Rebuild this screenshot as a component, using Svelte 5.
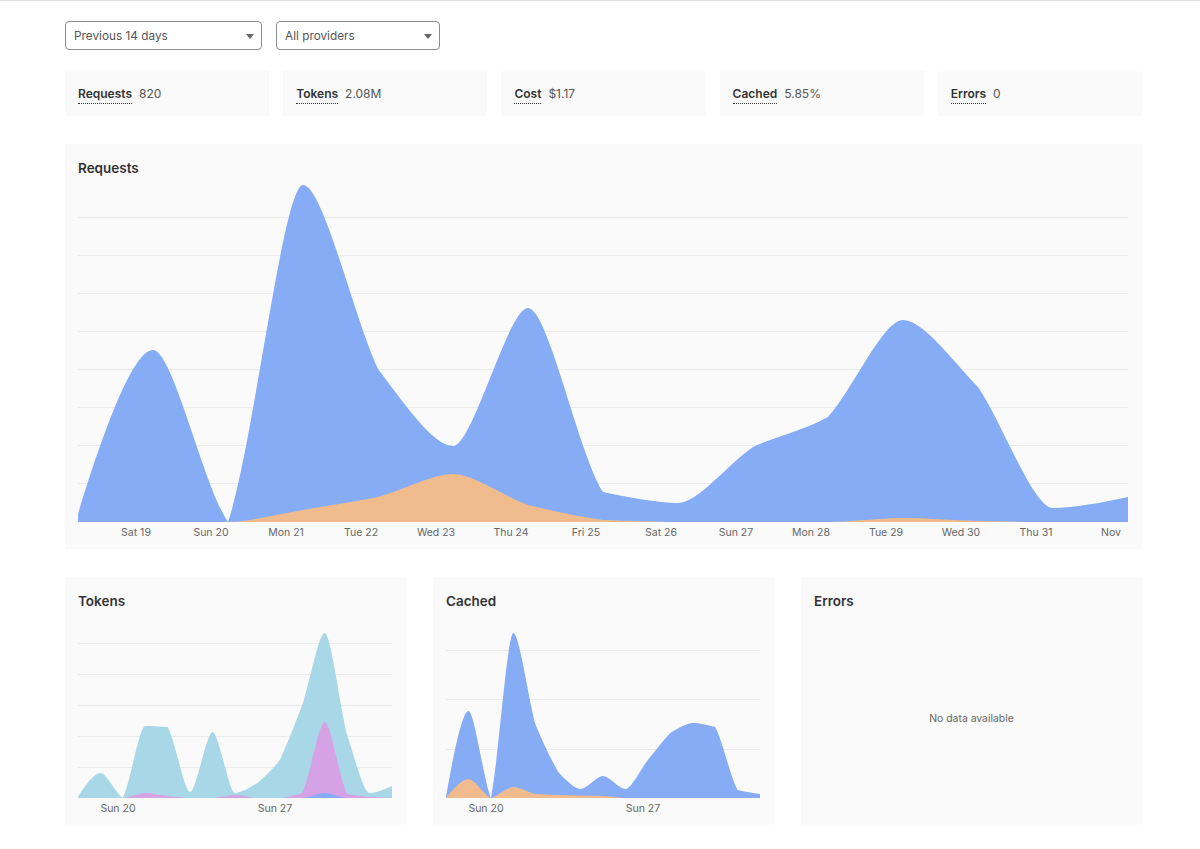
<script>
  const stats = [
    { label: 'Requests', value: '820' },
    { label: 'Tokens', value: '2.08M' },
    { label: 'Cost', value: '$1.17' },
    { label: 'Cached', value: '5.85%' },
    { label: 'Errors', value: '0' }
  ]

  const blue = '#85acf5'
  const orange = '#f0bb8d'
  const teal = '#a8d8e8'
  const pink = '#d5a2e6'

  const days = ['Sat 19', 'Sun 20', 'Mon 21', 'Tue 22', 'Wed 23', 'Thu 24', 'Fri 25', 'Sat 26', 'Sun 27', 'Mon 28', 'Tue 29', 'Wed 30', 'Thu 31', 'Nov']

  const requests = {
    width: 1050,
    height: 369,
    base: 342,
    grid: [37, 75, 113, 151, 189, 227, 265, 303],
    ticks: days.map((label, i) => ({ label, x: 58 + i * 75 })),
    series: [
      { color: blue, values: [8, 172, 0, 337, 153, 76, 214, 30, 19, 75, 105, 202, 135, 14, 25] },
      { color: orange, values: [0, 0, 0, 12, 25, 48, 17, 2, 0, 0, 0, 4, 1, 0, 0] }
    ]
  }

  const tokens = {
    width: 314,
    height: 212,
    base: 185,
    grid: [30, 61, 92, 123, 154],
    ticks: [{ label: 'Sun 20', x: 40 }, { label: 'Sun 27', x: 197 }],
    series: [
      { color: teal, values: [1, 25, 0, 72, 71, 6, 66, 5, 15, 38, 93, 165, 63, 5, 12] },
      { color: pink, values: [0, 0, 0, 5, 2, 0, 0, 3, 0, 0, 5, 76, 4, 1, 0] },
      { color: blue, values: [0, 0, 0, 0, 0, 0, 0, 0, 0, 0, 0, 5, 0, 0, 0] }
    ]
  }

  const cached = {
    width: 314,
    height: 212,
    base: 185,
    grid: [37, 86, 136],
    ticks: [{ label: 'Sun 20', x: 40 }, { label: 'Sun 27', x: 197 }],
    series: [
      { color: blue, values: [1, 87, 0, 165, 73, 26, 9, 22, 9, 38, 65, 75, 71, 8, 4] },
      { color: orange, values: [0, 19, 0, 11, 4, 3, 2.5, 2, 0, 0, 0, 0, 0, 0, 0] }
    ]
  }

  // monotone tangents, except that a slope change keeps a bit of a corner
  // and a drop to the baseline between two humps ends in a notch
  function tangents(values, ys, step) {
    const n = ys.length
    const d = ys.slice(1).map((y, i) => (y - ys[i]) / step)
    const out = new Array(n).fill(0)
    const into = new Array(n).fill(0)
    for (let i = 1; i < n - 1; i++) {
      const a = d[i - 1]
      const b = d[i]
      if (a * b > 0) {
        const m = (Math.sign(a) + Math.sign(b)) * Math.min(Math.abs(a), Math.abs(b), 0.25 * Math.abs(a + b))
        into[i] = m + (a - m) * 0.6
        out[i] = m + (b - m) * 0.6
      } else if (values[i] === 0 && a > 0 && b < 0) {
        into[i] = a * 0.65
        out[i] = b * 0.65
      }
    }
    out[0] = (3 * d[0] - into[1]) / 2
    into[n - 1] = (3 * d[n - 2] - out[n - 2]) / 2
    return { into, out }
  }

  function areaPath(values, chart) {
    const step = chart.width / (values.length - 1)
    const ys = values.map((v) => chart.base - v)
    const { into, out } = tangents(values, ys, step)
    const dx = step / 3
    // flat tangents get a shorter handle so the tops stay narrow
    const reach = (m) => (m === 0 ? dx * 0.8 : dx)
    let d = `M0,${chart.base}L0,${ys[0]}`
    for (let i = 1; i < ys.length; i++) {
      const x0 = (i - 1) * step
      const x1 = i * step
      d += `C${x0 + reach(out[i - 1])},${ys[i - 1] + out[i - 1] * dx} ${x1 - reach(into[i])},${ys[i] - into[i] * dx} ${x1},${ys[i]}`
    }
    return d + `L${chart.width},${chart.base}Z`
  }
</script>

{#snippet areaChart(chart)}
  <svg class="plot" viewBox="0 0 {chart.width + 1} {chart.height}" height={chart.height} role="img">
    {#each chart.grid as y}
      <line x1="0" x2={chart.width} y1={y + 0.5} y2={y + 0.5} class="grid" />
    {/each}
    {#each chart.series as s}
      <path d={areaPath(s.values, chart)} fill={s.color} />
    {/each}
    {#each chart.ticks as tick}
      <text x={tick.x} y={chart.base + 14} text-anchor="middle" class="tick">{tick.label}</text>
    {/each}
  </svg>
{/snippet}

<main class="page">
  <div class="filters">
    <div class="select-wrap range">
      <select aria-label="Date range">
        <option>Previous 14 days</option>
        <option>Previous 30 days</option>
      </select>
      <svg class="caret" viewBox="0 0 8 5" width="8" height="5"><path d="M0 0h8L4 5z" /></svg>
    </div>
    <div class="select-wrap provider">
      <select aria-label="Provider">
        <option>All providers</option>
      </select>
      <svg class="caret" viewBox="0 0 8 5" width="8" height="5"><path d="M0 0h8L4 5z" /></svg>
    </div>
  </div>

  <div class="stats">
    {#each stats as stat}
      <div class="stat">
        <span class="stat-label">{stat.label}</span>
        <span class="stat-value">{stat.value}</span>
      </div>
    {/each}
  </div>

  <section class="card">
    <h3>Requests</h3>
    {@render areaChart(requests)}
  </section>

  <div class="lower">
    <section class="card">
      <h3>Tokens</h3>
      {@render areaChart(tokens)}
    </section>
    <section class="card">
      <h3>Cached</h3>
      {@render areaChart(cached)}
    </section>
    <section class="card">
      <h3>Errors</h3>
      <div class="empty">No data available</div>
    </section>
  </div>
</main>

<style>
  :global(body) {
    background: #fff;
    color: #333;
    font-family: Inter, "Noto Sans", sans-serif;
  }

  .page {
    display: flex;
    flex-direction: column;
    gap: 28px;
    box-sizing: border-box;
    min-height: 849px;
    padding: 20px 58px 0 65px;
    border-top: 1px solid #dedede;
  }

  .filters {
    display: flex;
    gap: 14px;
    margin-bottom: -7px;
  }

  .select-wrap {
    position: relative;
  }

  .range {
    width: 197px;
  }

  .provider {
    width: 164px;
  }

  select {
    appearance: none;
    display: block;
    box-sizing: border-box;
    width: 100%;
    height: 29px;
    padding: 0 8px;
    border: 1px solid #8c8c8c;
    border-radius: 4px;
    background: #fff;
    color: #555;
    font: 11.8px Inter, "Noto Sans", sans-serif;
  }

  .caret {
    position: absolute;
    top: 13px;
    right: 8px;
    fill: #666;
    pointer-events: none;
  }

  .stats {
    display: grid;
    grid-template-columns: repeat(5, minmax(0, 1fr));
    gap: 14px;
  }

  .stat {
    display: flex;
    align-items: center;
    gap: 7px;
    box-sizing: border-box;
    height: 45px;
    padding: 3px 13px 0;
    background: #fafafa;
    font-size: 12px;
  }

  .stat-label {
    padding-bottom: 1px;
    border-bottom: 1px dotted #333;
    color: #333;
    font-weight: 600;
    line-height: 16px;
  }

  .stat-value {
    margin-top: -3px;
    color: #555;
  }

  .card {
    display: flex;
    flex-direction: column;
    box-sizing: border-box;
    padding: 14px 13px 0;
    background: #fafafa;
  }

  h3 {
    height: 20px;
    margin: 0 0 2px;
    color: #333;
    font-size: 13.5px;
    font-weight: 600;
    line-height: 20px;
  }

  .plot {
    display: block;
    width: 100%;
  }

  .grid {
    stroke: #ebebeb;
    stroke-width: 1;
  }

  .tick {
    fill: #666;
    font-size: 10.5px;
  }

  .lower {
    display: grid;
    grid-template-columns: repeat(3, minmax(0, 1fr));
    gap: 27px;
  }

  .empty {
    display: flex;
    flex: 1;
    align-items: center;
    justify-content: center;
    padding-bottom: 2px;
    color: #666;
    font-size: 10.4px;
  }
</style>
